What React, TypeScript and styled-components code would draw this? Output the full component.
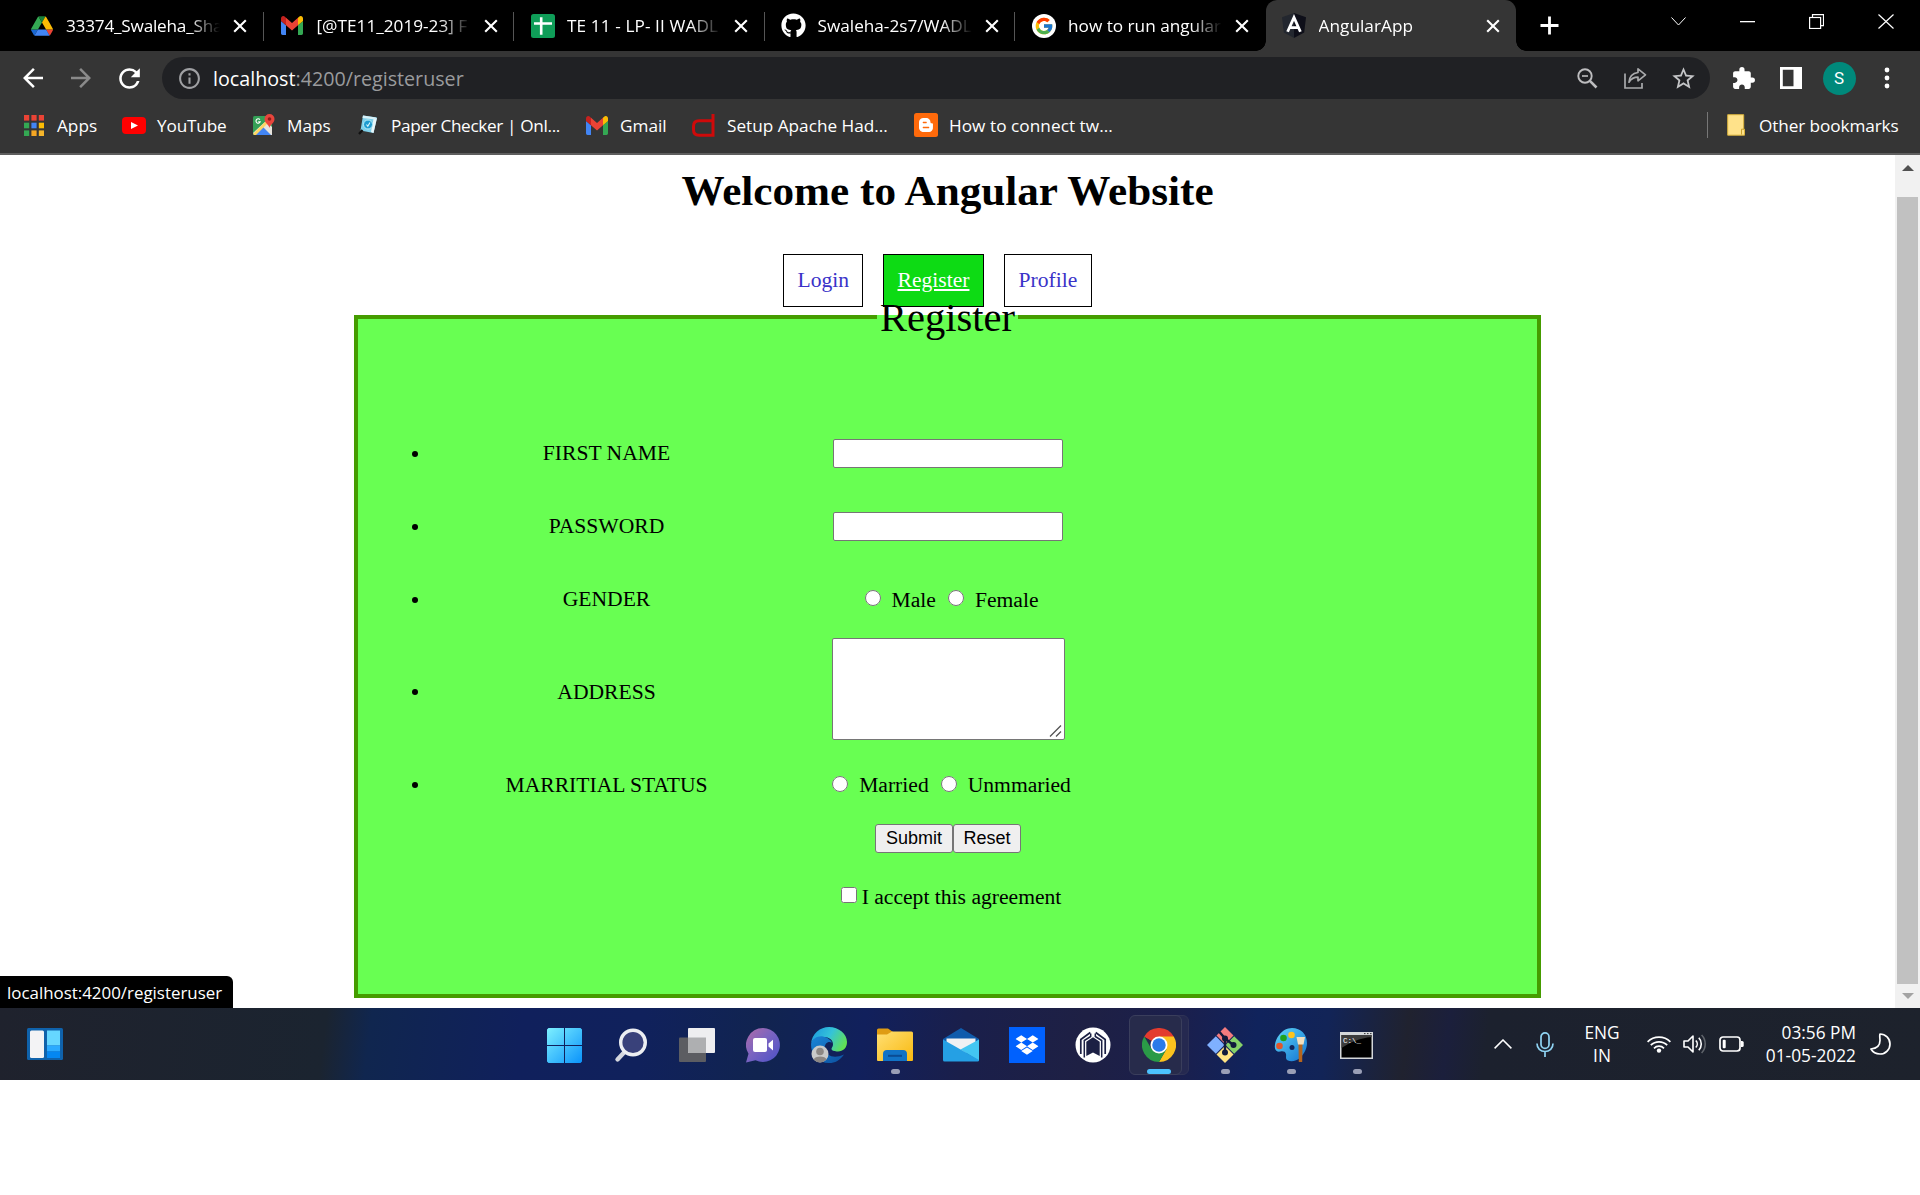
import React from 'react';
import styled, { createGlobalStyle, css } from 'styled-components';
import { FcGoogle } from 'react-icons/fc';
import { FaGithub, FaBloggerB, FaDropbox } from 'react-icons/fa';
import { MdArrowBack, MdArrowForward, MdRefresh, MdInfoOutline, MdStarBorder, MdExtension } from 'react-icons/md';

const UI_FONT = '"Open Sans", "Noto Sans", sans-serif';
const PAGE_FONT = '"Liberation Serif", "Times New Roman", serif';

const GlobalStyle = createGlobalStyle`
  *, *::before, *::after { box-sizing: border-box; }
  body { margin: 0; background: #fff; }
  svg { display: block; flex: none; }
`;

const Screen = styled.div`
  width: 1920px;
  height: 1195px;
  overflow: hidden;
  background: #fff;
  display: flex;
  flex-direction: column;
`;

/* ---------- tab strip ---------- */

const TabStrip = styled.div`
  height: 51px;
  background: #000;
  display: flex;
  padding-left: 13px;
  flex: none;
`;

const TabBox = styled.div<{ $active?: boolean; $last?: boolean }>`
  position: relative;
  width: 250.5px;
  height: 51px;
  display: flex;
  align-items: center;
  padding-left: 16px;
  font: 17.2px ${UI_FONT};
  color: #fff;
  ${(p) =>
    !p.$active &&
    !p.$last &&
    css`
      &::after {
        content: '';
        position: absolute;
        right: 0;
        top: 12px;
        width: 1px;
        height: 29px;
        background: #555;
      }
    `}
  ${(p) =>
    p.$active &&
    css`
      background: #353535;
      border-radius: 11px 11px 0 0;
      &::before,
      &::after {
        content: '';
        position: absolute;
        bottom: 0;
        width: 10px;
        height: 10px;
      }
      &::before {
        left: -10px;
        background: radial-gradient(circle at 0 0, transparent 9.5px, #353535 10px);
      }
      &::after {
        right: -10px;
        background: radial-gradient(circle at 100% 0, transparent 9.5px, #353535 10px);
      }
    `}
`;

const IconSlot = styled.span<{ $w: number; $shift?: number }>`
  width: ${(p) => p.$w}px;
  padding-left: ${(p) => p.$shift ?? 0}px;
  display: flex;
  justify-content: center;
  align-items: center;
  flex: none;
`;

const TabTitle = styled.span<{ $ls?: number }>`
  margin-left: 12px;
  width: 154px;
  flex: none;
  white-space: nowrap;
  line-height: 26px;
  letter-spacing: ${(p) => p.$ls ?? 0}px;
  mask-image: linear-gradient(90deg, #000 123px, transparent 154px);
`;

const TabClose = styled.span`
  margin-left: 8px;
  width: 24px;
  display: flex;
  justify-content: center;
`;

const NewTab = styled.div`
  width: 67px;
  display: flex;
  justify-content: center;
  align-items: center;
`;

const WindowControls = styled.div`
  margin-left: auto;
  display: flex;
  height: 43px;
`;

const WindowButton = styled.div`
  width: 69px;
  display: flex;
  justify-content: center;
  align-items: center;
`;

/* ---------- toolbar ---------- */

const Toolbar = styled.div`
  height: 54px;
  background: #353535;
  display: flex;
  padding: 0 9px;
  align-items: center;
  flex: none;
`;

const ToolSlot = styled.span`
  width: 48px;
  display: flex;
  justify-content: center;
  align-items: center;
  flex: none;
`;

const Omnibox = styled.div`
  width: 1548px;
  height: 42px;
  margin: 0 9px;
  padding-right: 3px;
  border-radius: 21px;
  background: #202124;
  display: flex;
  align-items: center;
  font: 19.7px ${UI_FONT};
  color: #9a9b9d;
`;

const Url = styled.span`
  flex: 1;
  line-height: 28px;
  padding-top: 1px;
  white-space: nowrap;
  b { font-weight: 400; color: #fff; }
`;

const Avatar = styled.span`
  width: 33px;
  height: 33px;
  border-radius: 50%;
  background: #00897b;
  color: #fff;
  display: flex;
  justify-content: center;
  align-items: center;
  font: 17px Roboto, sans-serif;
`;

/* ---------- bookmarks ---------- */

const BookmarkBar = styled.div`
  height: 50px;
  background: #353535;
  border-bottom: 2px solid #5e5e5e;
  display: flex;
  align-items: flex-start;
  padding: 7px 0 0 21px;
  flex: none;
`;

const BookmarkItem = styled.div<{ $w?: number; $ls?: number }>`
  width: ${(p) => (p.$w ? p.$w + 'px' : 'auto')};
  height: 26px;
  display: flex;
  align-items: center;
  gap: 11px;
  font: 17.2px ${UI_FONT};
  letter-spacing: ${(p) => p.$ls ?? 0}px;
  color: #fff;
  white-space: nowrap;
`;

const OtherBookmarks = styled.div`
  margin-left: auto;
  height: 26px;
  width: 213px;
  border-left: 1px solid #777;
  padding-left: 16px;
`;

/* ---------- page ---------- */

const Viewport = styled.div`
  position: relative;
  height: 853px;
  display: flex;
  flex: none;
`;

const Page = styled.main`
  width: 1895px;
  height: 853px;
  display: flex;
  flex-direction: column;
  align-items: center;
  font: 21.6px ${PAGE_FONT};
  color: #000;
`;

const Heading = styled.h1`
  margin: 11px 0 0;
  font-size: 43.2px;
  line-height: 50px;
  font-weight: 700;
`;

const Nav = styled.nav`
  margin: 38px 21px -13px 0;
  display: flex;
  gap: 20px;
`;

const NavLink = styled.a<{ $active?: boolean; $w: number }>`
  width: ${(p) => p.$w}px;
  height: 53px;
  border: 1px solid #000;
  line-height: 25px;
  padding: 13px 0 0 14px;
  color: ${(p) => (p.$active ? '#fff' : '#3a32c8')};
  background: ${(p) => (p.$active ? '#0ddb14' : '#fff')};
  text-decoration: ${(p) => (p.$active ? 'underline' : 'none')};
`;

const Panel = styled.fieldset`
  position: relative;
  width: 1187px;
  height: 704px;
  margin: 0;
  padding: 0;
  border: 4px solid #459c00;
  background: #68ff52;
`;

const Legend = styled.legend`
  margin: 0 auto;
  padding: 1px 3px 0;
  font-size: 40.5px;
  line-height: 45px;
`;

const FormGrid = styled.div`
  margin-top: 77px;
  display: grid;
  grid-template-columns: 113px 271px 414px;
  grid-template-rows: 73px 73px 73px 110px 78px;
  align-items: center;
  justify-items: center;
`;

const Bullet = styled.span<{ $tall?: boolean }>`
  width: 6px;
  height: 6px;
  margin-top: ${(p) => (p.$tall ? 2 : 0)}px;
  border-radius: 50%;
  background: #000;
`;

const FieldLabel = styled.span<{ $tall?: boolean }>`
  line-height: 24px;
  padding: ${(p) => (p.$tall ? '1px 0 0' : '0 0 1px')};
`;

const Control = styled.div`
  width: 414px;
  padding-right: 2px;
  display: flex;
  justify-content: center;
`;

const TextInput = styled.input`
  width: 230px;
  height: 29px;
  border: 1px solid #767676;
  border-radius: 2px;
  background: #fff;
  padding: 0;
`;

const AreaWrap = styled.span`
  position: relative;
  display: flex;
  margin-bottom: 5px;
  svg { position: absolute; right: 3px; bottom: 3px; }
`;

const Area = styled.textarea`
  width: 233px;
  height: 102px;
  resize: none;
  border: 1px solid #767676;
  border-radius: 2px;
  background: #fff;
`;

const Choices = styled.div`
  display: flex;
  align-items: center;
  line-height: 24px;
  padding-right: 5px;
`;

const Choice = styled.label`
  display: flex;
  align-items: center;
`;

const Radio = styled.input`
  width: 16px;
  height: 16px;
  margin: 0 11px 3px 12px;
`;

const Actions = styled.div`
  width: 798px;
  padding-left: 382px;
  display: flex;
  justify-content: center;
`;

const FormButton = styled.button<{ $w: number }>`
  width: ${(p) => p.$w}px;
  height: 29px;
  padding: 0;
  border: 1px solid #767676;
  border-radius: 3px;
  background: #efefef;
  color: #000;
  font: 18px "Liberation Sans", Arial, sans-serif;
`;

const Agreement = styled(Actions)`
  margin-top: 32px;
  padding-left: 383px;
  line-height: 24px;
  align-items: center;
`;

const Checkbox = styled.input`
  width: 16px;
  height: 16px;
  margin: 0 5px 4px 5px;
`;

const Scrollbar = styled.div`
  width: 25px;
  height: 853px;
  background: #f1f1f1;
  display: flex;
  flex-direction: column;
  align-items: center;
  padding: 10px 0 9px;
`;

const Thumb = styled.div`
  width: 21px;
  height: 787px;
  margin: 26px 0 9px;
  background: #c1c1c1;
`;

const Arrow = styled.div<{ $down?: boolean }>`
  border: 6px solid transparent;
  ${(p) =>
    p.$down
      ? css`border-top-color: #a3a3a3; border-bottom: 0;`
      : css`border-bottom-color: #505050; border-top: 0;`}
`;

const StatusBubble = styled.div`
  position: absolute;
  left: 0;
  bottom: 0;
  width: 233px;
  height: 32px;
  padding-left: 7px;
  border-radius: 0 6px 0 0;
  background: #000;
  color: #fff;
  font: 16.9px/33px ${UI_FONT};
  white-space: nowrap;
`;

/* ---------- taskbar ---------- */

const Taskbar = styled.footer`
  height: 72px;
  flex: none;
  display: grid;
  grid-template-columns: 531.5px 858px 1fr;
  background: linear-gradient(97deg, #1f222d 0, #1b2430 325px, #10264f 370px, #10205c 520px, #10215c 640px, #112450 760px, #11205c 860px, #1a1f4b 960px, #1e2044 1080px, #1b1f4c 1170px, #10235c 1250px, #122457 1320px, #20222f 1400px, #1b1f3c 1440px, #1c212e 1480px, #1d222c 1920px);
`;

const WidgetArea = styled.div`
  display: flex;
  align-items: center;
  padding: 0 0 0 27px;
`;

const Apps = styled.div`
  display: flex;
`;

const AppSlot = styled.div`
  position: relative;
  width: 66px;
  height: 72px;
  display: flex;
  justify-content: center;
  align-items: center;
  > svg { position: relative; top: 1px; }
`;

const Indicator = styled.span<{ $active?: boolean }>`
  position: absolute;
  bottom: 6px;
  left: ${(p) => (p.$active ? 21.5 : 29.5)}px;
  width: ${(p) => (p.$active ? 24 : 9)}px;
  height: 5px;
  border-radius: 3px;
  background: ${(p) => (p.$active ? '#4cc2ff' : '#9a9fb6')};
`;

const Highlight = styled.span<{ $back?: boolean }>`
  position: absolute;
  top: 7px;
  left: ${(p) => (p.$back ? 10.5 : 3.5)}px;
  width: 53px;
  height: 60px;
  border-radius: 6px;
  border: 1px solid ${(p) => (p.$back ? '#2f3356' : '#3a3e5c')};
  background: ${(p) => (p.$back ? '#252950' : '#272b4b')};
`;

const Tray = styled.div`
  display: flex;
  align-items: center;
  justify-content: flex-end;
  padding-right: 16px;
  color: #fff;
  font: 17.3px/23px ${UI_FONT};
  white-space: nowrap;
`;

const TrayText = styled.div<{ $w: number; $right?: boolean }>`
  width: ${(p) => p.$w}px;
  text-align: ${(p) => (p.$right ? 'right' : 'center')};
`;

/* ---------- drawings ---------- */

const CloseX = () => (
  <svg width="14" height="14" viewBox="0 0 14 14" stroke="#fff" strokeWidth="2.1">
    <path d="M1.2 1.2l11.6 11.6M12.8 1.2L1.2 12.8" />
  </svg>
);

const DriveIcon = () => (
  <svg width="22" height="20" viewBox="0 0 87.3 78">
    <path d="M6.6 66.85l3.85 6.65c.8 1.4 1.95 2.5 3.3 3.3l13.75-23.8H0c0 1.55.4 3.1 1.2 4.5z" fill="#1967d2" />
    <path d="M43.65 25L29.9 1.2c-1.35.8-2.5 1.9-3.3 3.3L1.2 48.5A9 9 0 000 53h27.5z" fill="#34a853" />
    <path d="M73.55 76.8c1.35-.8 2.5-1.9 3.3-3.3l9.25-16c.8-1.4 1.2-2.95 1.2-4.5H59.8l5.85 11.5z" fill="#ea4335" />
    <path d="M43.65 25L57.4 1.2C56.05.4 54.5 0 52.9 0H34.4c-1.6 0-3.15.45-4.5 1.2z" fill="#188038" />
    <path d="M59.8 53H27.5L13.75 76.8c1.35.8 2.9 1.2 4.5 1.2h50.8c1.6 0 3.15-.45 4.5-1.2z" fill="#4285f4" />
    <path d="M73.4 26.5L60.7 4.5c-.8-1.4-1.95-2.5-3.3-3.3L43.65 25 59.8 53h27.45c0-1.55-.4-3.1-1.2-4.5z" fill="#fbbc04" />
  </svg>
);

const GmailIcon = () => (
  <svg width="22" height="19" viewBox="52 42 88 66" preserveAspectRatio="none">
    <path fill="#4285f4" d="M58 108h14V74L52 59v43c0 3.32 2.69 6 6 6" />
    <path fill="#34a853" d="M120 108h14c3.32 0 6-2.69 6-6V59l-20 15" />
    <path fill="#fbbc04" d="M120 48v26l20-15v-8c0-7.42-8.47-11.65-14.4-7.2" />
    <path fill="#ea4335" d="M72 74V48l24 18 24-18v26L96 92" />
    <path fill="#c5221f" d="M52 51v8l20 15V48l-5.6-4.2c-5.94-4.45-14.4-.22-14.4 7.2" />
  </svg>
);

const SheetIcon = () => (
  <svg width="24" height="24" viewBox="0 0 24 24">
    <rect width="24" height="24" rx="2.5" fill="#0f9d58" />
    <path d="M10.2 3.2v17.6M3 9.5h18" stroke="#fff" strokeWidth="2.6" />
  </svg>
);

const GoogleIcon = () => (
  <svg width="24" height="24" viewBox="0 0 24 24">
    <circle cx="12" cy="12" r="12" fill="#fff" />
    <g transform="translate(2 2)"><FcGoogle size={20} /></g>
  </svg>
);

const AngularIcon = () => (
  <svg width="24" height="25" viewBox="0 0 24 25">
    <path d="M12 0L0 4.2l1.8 15.2L12 25z" fill="#23272f" />
    <path d="M12 0l12 4.2-1.8 15.2L12 25z" fill="#0e0f19" />
    <path d="M5.6 18.8L12 4.5l6.400 14.300M8.2 14.6h7.6" stroke="#fff" strokeWidth="2.800" fill="none" />
  </svg>
);

const AppsIcon = () => {
  const colors = ['#ea4335', '#ea4335', '#ea4335', '#34a853', '#4285f4', '#fbbc04', '#34a853', '#f5a623', '#f5b52b'];
  return (
    <svg width="20" height="21" viewBox="0 0 20 21">
      {colors.map((c, i) => (
        <rect key={i} x={(i % 3) * 7.4} y={Math.floor(i / 3) * 7.7} width="5.2" height="5.6" fill={c} />
      ))}
    </svg>
  );
};

const YouTubeIcon = () => (
  <svg width="24" height="17" viewBox="0 0 24 17">
    <rect width="24" height="17" rx="4" fill="#f00" />
    <path d="M9 5l7 3.5L9 12z" fill="#fff" />
  </svg>
);

const MapsIcon = () => (
  <svg width="22" height="22" viewBox="0 0 22 22">
    <rect y="2" width="19" height="19" rx="1.5" fill="#34a056" />
    <path d="M0 19L13 7l6 6v8H2z" fill="#e8e4dc" />
    <path d="M2 21l8-8 8 8z" fill="#4285f4" />
    <path d="M0 20L14 6l2 2L3 21H1z" fill="#fdd663" />
    <path d="M6.9 5.6a2.2 2.2 0 10.4 2.1H5.2" stroke="#fff" strokeWidth="1.1" fill="none" />
    <path d="M16.500 14c-.6-3.600-5-4.600-5-9a5 5 0 0110 0c0 4.400-4.400 5.400-5 9z" fill="#e8453c" />
    <circle cx="16.500" cy="5" r="1.800" fill="#8c1d18" />
  </svg>
);

const PaperIcon = () => (
  <svg width="20" height="20" viewBox="0 0 20 20">
    <path d="M5 .5L19 2.500 15.500 18 2.500 15.500z" fill="#7fd0ea" />
    <path d="M15.500 4l3.500-1-3.500 15-2.500-1z" fill="#e8f6fa" />
    <path d="M5 .5l13 2-.5 2L4.500 3z" fill="#d9f1f8" />
    <circle cx="10" cy="9.500" r="4.500" fill="#1e9bd0" stroke="#b5ecf8" />
    <path d="M8.500 9.500l1.300 1.800 2.200-3.800" stroke="#d8f6fc" strokeWidth="1.100" fill="none" />
    <path d="M4.500 15L1 19" stroke="#111" strokeWidth="2.200" />
  </svg>
);

const DIcon = () => (
  <svg width="23" height="23" viewBox="0 0 23 23" fill="none" stroke="#cf0a0a" strokeWidth="3">
    <path d="M21 0v21.300H7c-3.500 0-5.500-2-5.500-5.500v-3.600c0-3.500 2-5.500 5.500-5.500h14" />
  </svg>
);

const BloggerIcon = () => (
  <svg width="24" height="24" viewBox="0 0 24 24">
    <rect width="24" height="24" rx="2.500" fill="#ff6a0b" />
    <g transform="translate(4 4)"><FaBloggerB size={16} color="#fff" /></g>
  </svg>
);

const FolderMini = () => (
  <svg width="18" height="22" viewBox="0 0 18 22">
    <path d="M.7.700h16v14.500h.8v6H.7z" fill="#ffe28a" stroke="#d9b23c" />
    <path d="M14.500 20.500v-5.300h2.500" stroke="#c9a02c" fill="none" />
  </svg>
);

const ZoomOutIcon = () => (
  <svg width="21" height="21" viewBox="0 0 21 21" fill="none" stroke="#bdbdbf">
    <circle cx="8" cy="8" r="6.700" strokeWidth="1.900" />
    <path d="M12.900 12.900l6.600 6.600" strokeWidth="2.600" />
    <path d="M5 8h6" strokeWidth="1.600" />
  </svg>
);

const ShareIcon = () => (
  <svg width="23" height="22" viewBox="0 0 23 22" fill="none" stroke="#a9aaac" strokeWidth="1.700">
    <path d="M1 6.500V21h17v-5" />
    <path d="M14 1.800l7.500 6-7.500 6v-3.600c-4 0-6.800 1.400-9 5 .4-5.500 3.500-9 9-9.700z" strokeLinejoin="round" />
  </svg>
);

const PanelIcon = () => (
  <svg width="22" height="22" viewBox="0 0 22 22">
    <path d="M0 0h22v22H0zM2.800 2.800v16.400h10.700V2.800z" fillRule="evenodd" fill="#fff" />
  </svg>
);

const DotsIcon = () => (
  <svg width="6" height="22" viewBox="0 0 6 22" fill="#fff">
    <circle cx="3" cy="3" r="2.400" /><circle cx="3" cy="11" r="2.400" /><circle cx="3" cy="19" r="2.400" />
  </svg>
);

const WidgetsIcon = () => (
  <svg width="36" height="32" viewBox="0 0 36 32">
    <rect width="36" height="32" rx="1.500" fill="#0f62ab" />
    <rect x="3" y="2.500" width="14" height="27.500" rx="1.500" fill="#f3f3f5" />
    <path d="M20 2.500h13v15H20z" fill="#66d7ff" />
    <path d="M20 17.500h13v6H20z" fill="#2aaaff" />
    <path d="M20 23.500h13V30H20z" fill="#0487f2" />
  </svg>
);

const StartIcon = () => (
  <svg width="35" height="35" viewBox="0 0 35 35">
    <defs>
      <linearGradient id="start" gradientUnits="userSpaceOnUse" x1="0" y1="0" x2="35" y2="35">
        <stop offset="0" stopColor="#7df0ff" /><stop offset="1" stopColor="#0a93fb" />
      </linearGradient>
    </defs>
    <path fill="url(#start)" d="M1.500 0H17v17H0V1.500zM18 0h15.500L35 1.500V17H18zM0 18h17v17H1.500L0 33.500zM18 18h17v15.500L33.500 35H18z" />
  </svg>
);

const SearchIcon = () => (
  <svg width="36" height="36" viewBox="0 0 36 36">
    <path d="M11.500 25L4.500 32.500" stroke="#d4d7de" strokeWidth="4.400" strokeLinecap="round" />
    <circle cx="20" cy="15.500" r="12.300" fill="#39417a" stroke="#eceef2" strokeWidth="3.400" />
  </svg>
);

const TaskViewIcon = () => (
  <svg width="36" height="34" viewBox="0 0 36 34">
    <rect y="9.500" width="27" height="24.500" rx="1" fill="#5c5d62" />
    <rect x="9" width="27" height="25" rx="1" fill="#eeeef0" />
    <path d="M9 9.500h18V25H10a1 1 0 01-1-1z" fill="#aeafb1" />
  </svg>
);

const ChatIcon = () => (
  <svg width="34" height="35" viewBox="0 0 34 35">
    <defs>
      <linearGradient id="chat" x1="0" y1="0" x2="1" y2="1">
        <stop offset="0" stopColor="#b06ba8" /><stop offset=".45" stopColor="#7b64c0" /><stop offset="1" stopColor="#4a50c8" />
      </linearGradient>
    </defs>
    <path d="M17 0a17 17 0 11-7.500 32.300L0 34.500l2.500-8.700A17 17 0 0117 0z" fill="url(#chat)" />
    <rect x="7" y="10" width="14" height="14" rx="2" fill="#fff" />
    <path d="M22.500 15.500l4.500-3.800v10.700l-4.500-3.800z" fill="#fff" />
  </svg>
);

const EdgeIcon = () => (
  <svg width="36" height="36" viewBox="0 0 36 36">
    <defs>
      <linearGradient id="edgeTop" x1="0" y1=".2" x2="1" y2=".6">
        <stop offset="0" stopColor="#1c9be0" /><stop offset=".5" stopColor="#35c3d8" /><stop offset="1" stopColor="#62e052" />
      </linearGradient>
      <linearGradient id="edgeLow" x1="0" y1="0" x2="1" y2="1">
        <stop offset="0" stopColor="#1a86d8" /><stop offset="1" stopColor="#0c4f9e" />
      </linearGradient>
    </defs>
    <path d="M.2 16A18 18 0 0118 0c10 0 18 7 18 15 0 6-4 9.500-9 9.500-3.500 0-6.500-1-6.500-2.800 0-1.200 1.500-1.900 1.500-4.500C22 13 18 10 13 10 6 10 1 13 .2 16z" fill="url(#edgeTop)" />
    <path d="M.2 16C1.500 11.500 7 8.500 12 9.500c5 1 8 4 9 6-5-2-8 2-7 7 1.400 6.500 9 9.500 19 5C29 33.500 24 36 18 36A18 18 0 01.200 16z" fill="url(#edgeLow)" />
    <circle cx="9" cy="27" r="8.500" fill="#c9c9c9" />
    <circle cx="9" cy="24.500" r="3.800" fill="#8c8784" />
    <path d="M2.700 32.500c1-4 12-4 12.800 0a8.500 8.500 0 01-12.800 0z" fill="#8c8784" />
  </svg>
);

const ExplorerIcon = () => (
  <svg width="36" height="34" viewBox="0 0 36 34">
    <defs>
      <linearGradient id="fold" x1="0" y1="0" x2="1" y2="1">
        <stop offset="0" stopColor="#ffdf74" /><stop offset="1" stopColor="#f9b90f" />
      </linearGradient>
    </defs>
    <path d="M0 2a1.500 1.500 0 011.500-1.500H11L16 4v6H0z" fill="#df9c13" />
    <path d="M0 6.500h10L15 3.500h19.500A1.500 1.500 0 0136 5v27a1 1 0 01-1 1H1a1 1 0 01-1-1z" fill="url(#fold)" />
    <path d="M6 33v-7a4 4 0 014-4h16a4 4 0 014 4v7z" fill="#1173c6" />
    <path d="M11 27.800h14" stroke="#0b4c93" strokeWidth="2" />
  </svg>
);

const MailIcon = () => (
  <svg width="36" height="34" viewBox="0 0 36 34">
    <path d="M0 11L18 0l18 11v10H0z" fill="#0f5bac" />
    <path d="M3.500 10.500h29V20L18 27 3.500 20z" fill="#f0f1f3" />
    <path d="M36 11.500V33L17.500 21.500z" fill="#43c6f2" />
    <path d="M0 11.500L36 32a1.500 1.500 0 01-1.500 1.500h-33A1.500 1.500 0 010 32z" fill="#25a0e4" />
  </svg>
);

const DropboxIcon = () => (
  <svg width="36" height="36" viewBox="0 0 36 36">
    <rect width="36" height="36" fill="#0061fe" />
    <g transform="translate(6.500 6.500)"><FaDropbox size={23} color="#fff" /></g>
  </svg>
);

const ArchIcon = () => (
  <svg width="36" height="36" viewBox="0 0 36 36">
    <circle cx="18" cy="18" r="17.500" fill="#fff" />
    <g fill="none" stroke="#1c2044" strokeWidth="1.700">
      <path d="M5.800 27V12.500l9.500-7" />
      <path d="M30.200 27V12.500l-9.500-7" />
    </g>
    <path d="M9.300 30.500V13.500l6.400-4V6.500M26.700 30.500V13.500l-6.400-4V6.500" fill="none" stroke="#1c2044" strokeWidth="1.500" />
    <path d="M11.300 29V14.800l6.700-4.500 6.700 4.500V29L18 25.500z" fill="#1c2044" />
  </svg>
);

const ChromeIcon = () => (
  <svg width="34" height="34" viewBox="0 0 48 48">
    <path d="M24 24L3.200 12A24 24 0 0144.800 12z" fill="#e33b2e" />
    <path d="M24 24V12h20.800A24 24 0 0124 48l10.400-18z" fill="#fcc31e" />
    <path d="M24 24l10.400 6L24 48A24 24 0 013.200 12l10.400 18z" fill="#2a9a47" />
    <path d="M13.600 18L3.200 12 24 12z" fill="#e33b2e" />
    <circle cx="24" cy="24" r="12" fill="#fff" />
    <circle cx="24" cy="24" r="9.500" fill="#2a7ae9" />
  </svg>
);

const GitIcon = () => (
  <svg width="36" height="36" viewBox="0 0 36 36">
    <path d="M18 0l8.500 8.500L18 17 9.500 8.500z" fill="#f37b7e" />
    <path d="M8.800 9.200L17.500 18l-8.700 8.800L0 18z" fill="#7fb0ff" />
    <path d="M27.200 9.200L36 18l-8.800 8.800L18.500 18z" fill="#86d169" />
    <path d="M18 19l8.500 8.500L18 36l-8.500-8.500z" fill="#ffe383" />
    <path d="M12.500 5L18 11.500V26M18 11.500l9 7" stroke="#111a3c" strokeWidth="2.400" fill="none" />
    <circle cx="18" cy="11.500" r="3" fill="#111a3c" />
    <circle cx="26.500" cy="18" r="3" fill="#111a3c" />
    <circle cx="18" cy="25.500" r="3" fill="#111a3c" />
  </svg>
);

const PaintIcon = () => (
  <svg width="36" height="36" viewBox="0 0 36 36">
    <defs>
      <linearGradient id="pal" x1="0" y1="0" x2="1" y2="1">
        <stop offset="0" stopColor="#5fd6f7" /><stop offset="1" stopColor="#1173d2" />
      </linearGradient>
    </defs>
    <path d="M19 1c9 0 15 6.500 15 15 0 6-3 11-7 15-3 3-9 4-12 2.500-3-1.500-1.500-4-2-6.500-.6-2.500-3-3-5.500-2.500-3 .5-5-.5-5.500-3C1 12 9 1 19 1z" fill="url(#pal)" />
    <circle cx="10.500" cy="11" r="3.300" fill="#1ea21e" />
    <circle cx="18.500" cy="8" r="3.300" fill="#fdc41c" />
    <circle cx="6.500" cy="19" r="3.300" fill="#e2562a" />
    <circle cx="19" cy="20.500" r="2.500" fill="#10265c" />
    <path d="M25.500 17h4l-.3 18h-3.400z" fill="#b5651d" />
    <path d="M23.500 10h8.500l-1.500 7.500h-5.500z" fill="#f1dfbf" />
  </svg>
);

const TerminalIcon = () => (
  <svg width="33" height="27" viewBox="0 0 33 27">
    <rect width="33" height="27" fill="#d4d7da" />
    <path d="M24 1.600h1.500M27 1.600h1.500M30 1.600h1.500" stroke="#333" />
    <rect x="1.500" y="3" width="30" height="22.500" fill="#000" />
    <path d="M1.500 3h30v2C20 6 9 11 1.500 16z" fill="#3c3c3c" />
    <text x="3" y="10.500" fontFamily="Liberation Mono, monospace" fontSize="7.500" fill="#fff">C:\_</text>
  </svg>
);

const TrayUp = () => (
  <svg width="18" height="10" viewBox="0 0 18 10" fill="none" stroke="#fff" strokeWidth="1.500"><path d="M.6 9.400L9 1l8.400 8.400" /></svg>
);
const MicIcon = () => (
  <svg width="18" height="25" viewBox="0 0 18 25" fill="none" stroke="#8fd3f2" strokeWidth="1.700">
    <rect x="5" y=".9" width="8" height="15.500" rx="4" />
    <path d="M1 11.500c0 5 3.500 8 8 8s8-3 8-8M9 19.500V25" />
  </svg>
);
const WifiIcon = () => (
  <svg width="24" height="18" viewBox="0 0 24 18" fill="none" stroke="#fff" strokeWidth="1.700">
    <path d="M.6 6.800a16.200 16.200 0 0122.800 0M3.800 10.200a11.600 11.600 0 0116.400 0M7 13.300a7 7 0 0110 0" />
    <circle cx="12" cy="15.600" r="2.200" fill="#fff" stroke="none" />
  </svg>
);
const SpeakerIcon = () => (
  <svg width="24" height="20" viewBox="0 0 24 20" fill="none" stroke="#fff" strokeWidth="1.600">
    <path d="M1 7h4l5-5v16l-5-5H1z" strokeLinejoin="round" />
    <path d="M12.800 6.500a5 5 0 010 7M15.800 3.800a9 9 0 010 12.400" />
    <path d="M18.600 1a13 13 0 010 18" stroke="#60646b" />
  </svg>
);
const BatteryIcon = () => (
  <svg width="25" height="16" viewBox="0 0 25 16">
    <rect x="1" y="1" width="20" height="14" rx="3" fill="none" stroke="#fff" strokeWidth="1.700" />
    <rect x="3.700" y="3.700" width="3" height="8.600" rx="1" fill="#fff" />
    <path d="M22 5h1.200a1.500 1.500 0 011.500 1.500v3a1.500 1.500 0 01-1.500 1.500H22z" fill="#fff" />
  </svg>
);
const MoonIcon = () => (
  <svg width="21" height="22" viewBox="0 0 21 22" fill="none" stroke="#fff" strokeWidth="1.700" strokeLinejoin="round">
    <path d="M10 1c5.500 0 10 4.500 10 10s-4.500 10-10 10c-3.800 0-7.200-1.800-9-5 6-.6 9-4 9-8.500 0-2.500-.6-4.500 0-6.500z" />
  </svg>
);

/* ---------- data ---------- */

const tabs = [
  { title: '33374_Swaleha_Sha', icon: <DriveIcon />, ls: -0.22 },
  { title: '[@TE11_2019-23] F', icon: <GmailIcon />, ls: 0 },
  { title: 'TE 11 - LP- II WADL', icon: <SheetIcon />, ls: 0.1 },
  { title: 'Swaleha-2s7/WADL', icon: <FaGithub size={25} color="#fff" />, ls: 0 },
  { title: 'how to run angular', icon: <GoogleIcon />, ls: 0 },
];

const bookmarks = [
  { title: 'Apps', icon: <AppsIcon />, w: 100, ls: 0 },
  { title: 'YouTube', icon: <YouTubeIcon />, w: 130, ls: -0.15 },
  { title: 'Maps', icon: <MapsIcon />, w: 104, ls: 0 },
  { title: 'Paper Checker | Onl...', icon: <PaperIcon />, w: 229, ls: -0.35 },
  { title: 'Gmail', icon: <GmailIcon />, w: 107, ls: 0 },
  { title: 'Setup Apache Had...', icon: <DIcon />, w: 222, ls: 0 },
  { title: 'How to connect tw...', icon: <BloggerIcon />, w: 220, ls: 0.05 },
];

const apps: { icon: React.ReactNode; state?: 'open' | 'active' }[] = [
  { icon: <StartIcon /> },
  { icon: <SearchIcon /> },
  { icon: <TaskViewIcon /> },
  { icon: <ChatIcon /> },
  { icon: <EdgeIcon /> },
  { icon: <ExplorerIcon />, state: 'open' },
  { icon: <MailIcon /> },
  { icon: <DropboxIcon /> },
  { icon: <ArchIcon /> },
  { icon: <ChromeIcon />, state: 'active' },
  { icon: <GitIcon />, state: 'open' },
  { icon: <PaintIcon />, state: 'open' },
  { icon: <TerminalIcon />, state: 'open' },
];

const Row = ({ label, tall, children }: { label: string; tall?: boolean; children: React.ReactNode }) => (
  <>
    <Bullet $tall={tall} />
    <FieldLabel $tall={tall}>{label}</FieldLabel>
    <Control>{children}</Control>
  </>
);

const RadioGroup = ({ name, options }: { name: string; options: string[] }) => (
  <Choices>
    {options.map((o) => (
      <Choice key={o}>
        <Radio type="radio" name={name} />
        {o}
      </Choice>
    ))}
  </Choices>
);

export default function App() {
  return (
    <Screen>
      <GlobalStyle />
      <TabStrip>
        {tabs.map((t, i) => (
          <TabBox key={t.title} $last={i === tabs.length - 1}>
            <IconSlot $w={25}>{t.icon}</IconSlot>
            <TabTitle $ls={t.ls}>{t.title}</TabTitle>
            <TabClose><CloseX /></TabClose>
          </TabBox>
        ))}
        <TabBox $active>
          <IconSlot $w={25}><AngularIcon /></IconSlot>
          <TabTitle $ls={0.05}>AngularApp</TabTitle>
          <TabClose><CloseX /></TabClose>
        </TabBox>
        <NewTab>
          <svg width="19" height="19" viewBox="0 0 19 19" stroke="#fff" strokeWidth="2.800"><path d="M9.500 .5v18M.5 9.500h18" /></svg>
        </NewTab>
        <WindowControls>
          <WindowButton>
            <svg width="15" height="9" viewBox="0 0 15 9" fill="none" stroke="#fff"><path d="M.5.500l7 7.500 7-7.500" /></svg>
          </WindowButton>
          <WindowButton>
            <svg width="15" height="2" viewBox="0 0 15 2"><rect width="15" height="1.300" fill="#fff" /></svg>
          </WindowButton>
          <WindowButton>
            <svg width="15" height="15" viewBox="0 0 15 15" fill="none" stroke="#fff" strokeWidth="1.200">
              <rect x=".6" y="3.500" width="11" height="11" /><path d="M3.500 3.500V.6h11v11h-3" />
            </svg>
          </WindowButton>
          <WindowButton>
            <svg width="16" height="15" viewBox="0 0 16 15" stroke="#fff" strokeWidth="1.200"><path d="M.5.500l15 14M15.500.500l-15 14" /></svg>
          </WindowButton>
        </WindowControls>
      </TabStrip>

      <Toolbar>
        <ToolSlot><MdArrowBack size={30} color="#fff" /></ToolSlot>
        <ToolSlot><MdArrowForward size={30} color="#8a8a8a" /></ToolSlot>
        <ToolSlot><MdRefresh size={31} color="#fff" /></ToolSlot>
        <Omnibox>
          <IconSlot $w={51} $shift={3}><MdInfoOutline size={25} color="#9fa0a3" /></IconSlot>
          <Url><b>localhost</b>:4200/registeruser</Url>
          <ToolSlot><ZoomOutIcon /></ToolSlot>
          <ToolSlot><ShareIcon /></ToolSlot>
          <ToolSlot><MdStarBorder size={27} color="#c4c5c7" /></ToolSlot>
        </Omnibox>
        <ToolSlot><MdExtension size={25} color="#fff" /></ToolSlot>
        <ToolSlot><PanelIcon /></ToolSlot>
        <ToolSlot><Avatar>S</Avatar></ToolSlot>
        <ToolSlot><DotsIcon /></ToolSlot>
      </Toolbar>

      <BookmarkBar>
        {bookmarks.map((b) => (
          <BookmarkItem key={b.title} $w={b.w} $ls={b.ls}>
            <IconSlot $w={25}>{b.icon}</IconSlot>
            {b.title}
          </BookmarkItem>
        ))}
        <OtherBookmarks>
          <BookmarkItem $ls={-0.1}>
            <IconSlot $w={24}><FolderMini /></IconSlot>
            Other bookmarks
          </BookmarkItem>
        </OtherBookmarks>
      </BookmarkBar>

      <Viewport>
        <Page>
          <Heading>Welcome to Angular Website</Heading>
          <Nav>
            <NavLink $w={80}>Login</NavLink>
            <NavLink $w={101} $active>Register</NavLink>
            <NavLink $w={88}>Profile</NavLink>
          </Nav>
          <Panel>
            <Legend>Register</Legend>
            <FormGrid>
              <Row label="FIRST NAME"><TextInput type="text" /></Row>
              <Row label="PASSWORD"><TextInput type="password" /></Row>
              <Row label="GENDER"><RadioGroup name="gender" options={['Male', 'Female']} /></Row>
              <Row label="ADDRESS" tall>
                <AreaWrap>
                  <Area />
                  <svg width="13" height="12" viewBox="0 0 13 12" stroke="#555" strokeWidth="1.300"><path d="M1 11.500L12 .5M7 11.500l5-5" /></svg>
                </AreaWrap>
              </Row>
              <Row label="MARRITIAL STATUS"><RadioGroup name="status" options={['Married', 'Unmmaried']} /></Row>
            </FormGrid>
            <Actions>
              <FormButton $w={78} type="button">Submit</FormButton>
              <FormButton $w={68} type="button">Reset</FormButton>
            </Actions>
            <Agreement>
              <Checkbox type="checkbox" />
              I accept this agreement
            </Agreement>
          </Panel>
        </Page>
        <Scrollbar>
          <Arrow />
          <Thumb />
          <Arrow $down />
        </Scrollbar>
        <StatusBubble>localhost:4200/registeruser</StatusBubble>
      </Viewport>

      <Taskbar>
        <WidgetArea><WidgetsIcon /></WidgetArea>
        <Apps>
          {apps.map((a, i) => (
            <AppSlot key={i}>
              {a.state === 'active' && (<><Highlight $back /><Highlight /></>)}
              {a.icon}
              {a.state && <Indicator $active={a.state === 'active'} />}
            </AppSlot>
          ))}
        </Apps>
        <Tray>
          <IconSlot $w={42}><TrayUp /></IconSlot>
          <IconSlot $w={42}><MicIcon /></IconSlot>
          <TrayText $w={72}>ENG<br />IN</TrayText>
          <IconSlot $w={42}><WifiIcon /></IconSlot>
          <IconSlot $w={30}><SpeakerIcon /></IconSlot>
          <IconSlot $w={42}><BatteryIcon /></IconSlot>
          <TrayText $w={104} $right>03:56 PM<br />01-05-2022</TrayText>
          <IconSlot $w={48}><MoonIcon /></IconSlot>
        </Tray>
      </Taskbar>
    </Screen>
  );
}
